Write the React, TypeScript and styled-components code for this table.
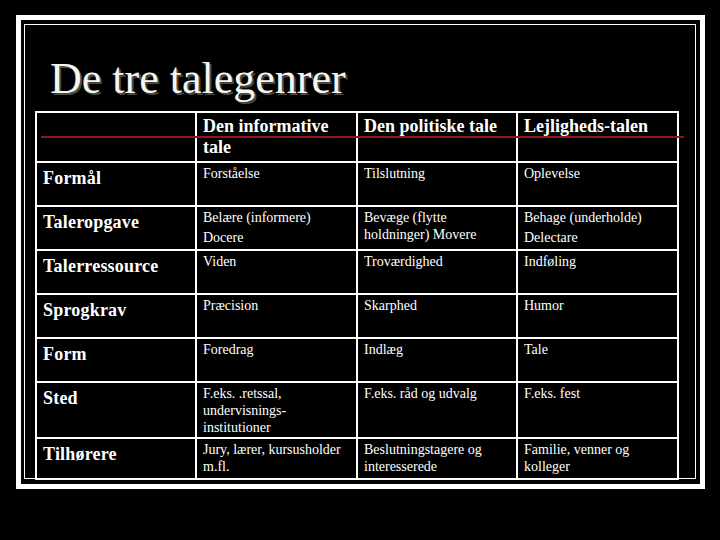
import styled, { createGlobalStyle } from 'styled-components'

const GlobalStyle = createGlobalStyle`
  html, body {
    margin: 0;
    padding: 0;
    background: #000;
  }
`

type Row = {
  label: string
  cells: string[][]
}

const headers = ['Den informative tale', 'Den politiske tale', 'Lejligheds-talen']

const rows: Row[] = [
  { label: 'Formål', cells: [['Forståelse'], ['Tilslutning'], ['Oplevelse']] },
  {
    label: 'Taleropgave',
    cells: [['Belære (informere)', 'Docere'], ['Bevæge (flytte holdninger) Movere'], ['Behage (underholde)', 'Delectare']],
  },
  { label: 'Talerressource', cells: [['Viden'], ['Troværdighed'], ['Indføling']] },
  { label: 'Sprogkrav', cells: [['Præcision'], ['Skarphed'], ['Humor']] },
  { label: 'Form', cells: [['Foredrag'], ['Indlæg'], ['Tale']] },
  { label: 'Sted', cells: [['F.eks. .retssal, undervisnings-institutioner'], ['F.eks. råd og udvalg'], ['F.eks. fest']] },
  {
    label: 'Tilhørere',
    cells: [['Jury, lærer, kursusholder m.fl.'], ['Beslutningstagere og interesserede'], ['Familie, venner og kolleger']],
  },
]

export default function App() {
  return (
    <>
      <GlobalStyle />
      <Slide>
        <OuterFrame>
          <InnerFrame>
            <Title>De tre talegenrer</Title>
            <Table>
              <HeaderCell />
              {headers.map((h) => (
                <HeaderCell key={h}>{h}</HeaderCell>
              ))}
              {rows.map((row) => (
                <RowGroup key={row.label} row={row} />
              ))}
            </Table>
          </InnerFrame>
        </OuterFrame>
        <TitleRule />
      </Slide>
    </>
  )
}

const RowGroup = ({ row }: { row: Row }) => (
  <>
    <LabelCell>{row.label}</LabelCell>
    {row.cells.map((paras, i) => (
      <DataCell key={i}>
        {paras.map((p) => (
          <Para key={p}>{p}</Para>
        ))}
      </DataCell>
    ))}
  </>
)

const Slide = styled.div`
  position: relative;
  width: 720px;
  height: 540px;
  box-sizing: border-box;
  padding: 15px 0 0 16px;
  background: #000;
  font-family: 'Liberation Serif', 'Times New Roman', serif;
  color: #fff;
  overflow: hidden;
`

const OuterFrame = styled.div`
  width: 689px;
  height: 474px;
  box-sizing: border-box;
  border: 5px solid #fff;
  padding: 4px 4px 5px 3px;
`

const InnerFrame = styled.div`
  display: flex;
  flex-direction: column;
  height: 100%;
  box-sizing: border-box;
  border: 1px solid #fff;
`

const Title = styled.h1`
  margin: 0;
  padding: 29px 0 0 25px;
  font-size: 44px;
  font-weight: normal;
  line-height: 50px;
  color: #f6f6ee;
  text-shadow: 2px 2px 0 #4a4a4a;
`

const Table = styled.div`
  display: grid;
  grid-template-columns: 158px 159px 158px 159px;
  grid-template-rows: 48px repeat(5, 42px) 54px 39px;
  gap: 2px;
  width: 644px;
  box-sizing: border-box;
  margin: 7px 0 0 10px;
  padding: 2px;
  background: #fff;
  flex-shrink: 0;
`

const Cell = styled.div`
  background: #000;
  color: #fff;
  padding: 2px 6px;
  overflow: hidden;
`

const HeaderCell = styled(Cell)`
  padding-top: 3px;
  font-size: 18px;
  font-weight: bold;
  line-height: 21px;
`

const LabelCell = styled(Cell)`
  padding-top: 4px;
  font-size: 18px;
  font-weight: bold;
  line-height: 22px;
  letter-spacing: 0.2px;
`

const DataCell = styled(Cell)`
  font-size: 14px;
  line-height: 17px;
`

const Para = styled.p`
  margin: 0 0 3px;
`

const TitleRule = styled.div`
  position: absolute;
  left: 41px;
  top: 136px;
  width: 643px;
  height: 2px;
  background: #8a1a1a;
`
